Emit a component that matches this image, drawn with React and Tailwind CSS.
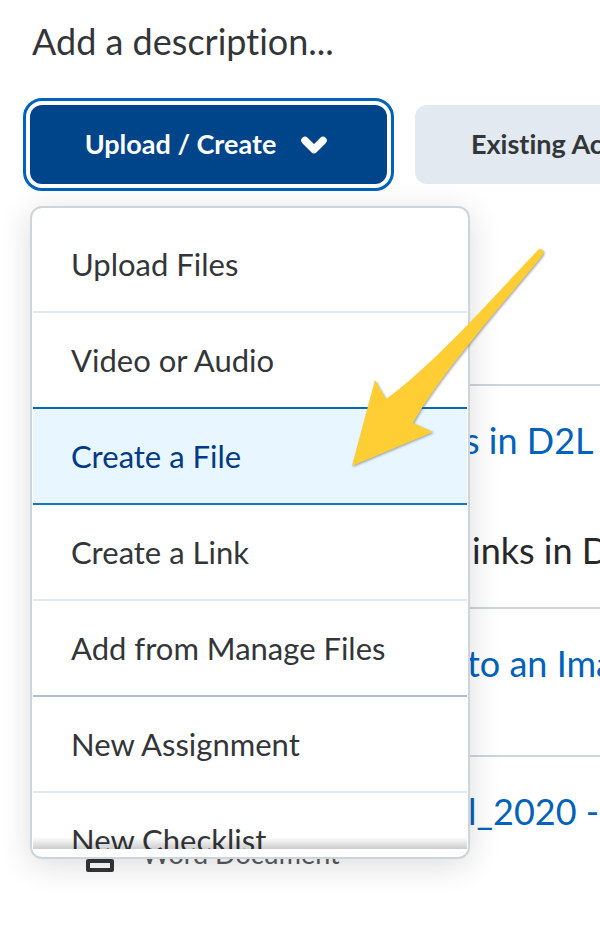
import { ChevronDown } from 'lucide-react'

const menuItems = [
  { label: 'Upload Files', line: 'border-[#e3e9f1]' },
  { label: 'Video or Audio', line: 'border-[#0a66b8]' },
  { label: 'Create a File', line: 'border-[#1576c4]', active: true },
  { label: 'Create a Link', line: 'border-[#e3e9f1]' },
  { label: 'Add from Manage Files', line: 'border-[#b4c1c8]' },
  { label: 'New Assignment', line: 'border-[#e3e9f1]' },
  { label: 'New Checklist', line: 'border-transparent' },
]

function CreateMenu() {
  return (
    <div className="absolute left-0 top-full z-10 mt-[22px] w-[440px] rounded-xl border-2 border-[#cdd5dc] bg-white pt-[9px] pb-2 shadow-[0_6px_32px_rgba(0,0,0,0.14)]">
      <ul role="menu" className="relative h-[632px] overflow-hidden px-px">
        {menuItems.map(item => (
          <li key={item.label} role="none">
            <button
              role="menuitem"
              className={`block h-24 w-full border-b-2 pl-[38px] text-left text-[31px] leading-[94px] ${item.line} ${item.active ? 'bg-[#e8f6ff] text-[#003a86]' : 'text-[#333639]'}`}
            >
              {item.label}
            </button>
          </li>
        ))}
        <li role="none" className="pointer-events-none absolute inset-x-px bottom-0 h-3 bg-linear-to-b from-transparent to-black/20" />
      </ul>
    </div>
  )
}

function Arrow() {
  return (
    <svg viewBox="0 0 200 226" aria-hidden="true"
         className="pointer-events-none absolute left-[321px] top-[137px] z-20 w-[200px] drop-shadow-[1px_1px_1px_rgba(70,80,110,0.5)]">
      <path
        d="M1 224 L24 138 L35 157 C81 124 136 62 187 8 C190 5 195 9 191 14 C148 67 90 131 62 181 L82 190 Z"
        fill="#ffce34"
      />
    </svg>
  )
}

export default function App() {
  return (
    <main className="min-h-screen overflow-hidden bg-white pb-[50px] font-['Lato',sans-serif] whitespace-nowrap text-[#333639] [font-variant-ligatures:none]">
      <p className="pl-8 pt-[17px] text-[36px] leading-[48px]">Add a description...</p>

      <div className="mt-10 flex gap-7 pl-[30px]">
        <div className="relative shrink-0">
          <button
            aria-haspopup="menu"
            aria-expanded="true"
            className="flex h-[79px] w-[357px] items-center justify-center gap-5 rounded-xl bg-[#00448a] text-[27px] font-bold text-white outline-3 outline-offset-4 outline-[#0062ba]"
          >
            Upload / Create
            <ChevronDown className="size-9" strokeWidth={5} />
          </button>
          <CreateMenu />
          <Arrow />
        </div>
        <button className="h-[79px] shrink-0 rounded-xl bg-[#e3e9f1] px-14 text-[27px] font-bold">
          Existing Activities
        </button>
      </div>

      <ul className="mt-[200px] ml-10 text-[36px] leading-[48px]">
        <li className="h-[223px] border-t-2 border-[#ccd5dc] pt-[30px] pl-[424px]">
          <a href="#d2l" className="block text-[#0062ba]">s in D2L</a>
          <p className="mt-[62px] pl-2 text-[#262829]">inks in D2L</p>
        </li>
        <li className="h-[148px] border-t-2 border-[#ccd5dc] pt-[30px] pl-[427px]">
          <a href="#image" className="text-[#0062ba]">to an Image</a>
        </li>
        <li className="border-t-2 border-[#ccd5dc] pt-[30px]">
          <a href="#word" className="block pl-[428px] text-[#0062ba]">l_2020 - Word</a>
          <div className="flex items-center pl-[46px] text-[27px] leading-[38px] text-[#565a5c]">
            <svg viewBox="0 0 28 38" className="mr-7 w-7" fill="none" stroke="#333639" strokeWidth="4" strokeLinejoin="round">
              <path d="M4 26V4H19L24 9V26M2 26H26V35H2Z" />
            </svg>
            Word Document
          </div>
        </li>
      </ul>
    </main>
  )
}
